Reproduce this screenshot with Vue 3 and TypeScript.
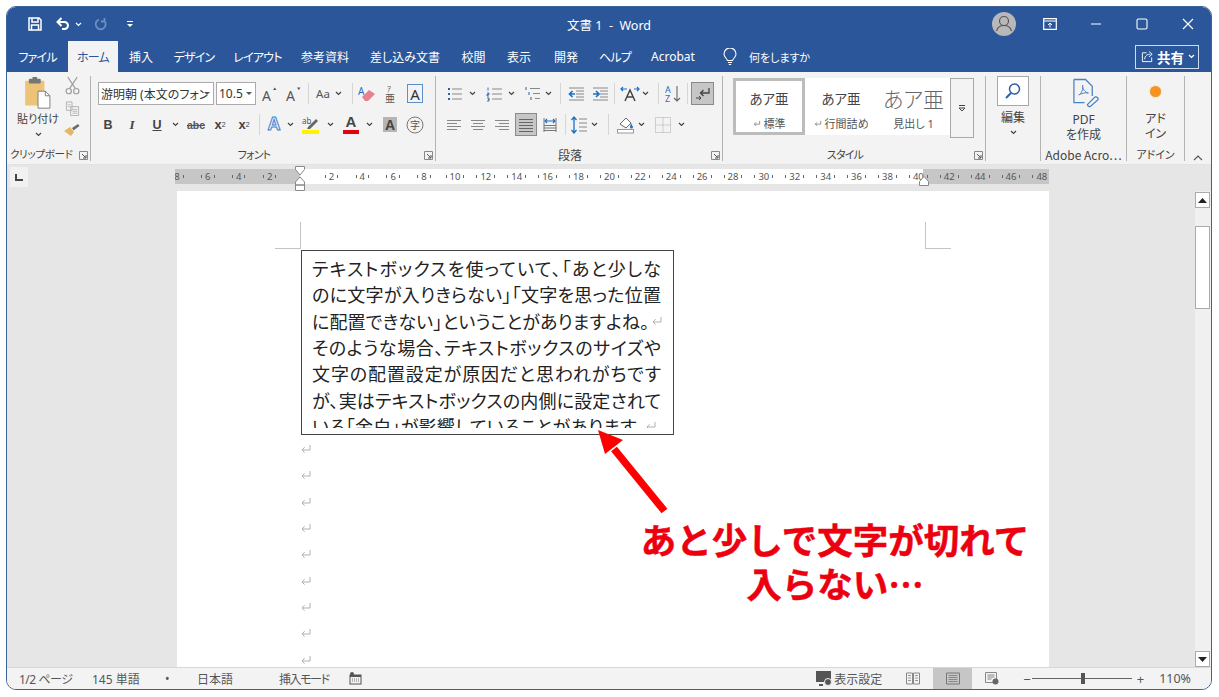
<script setup lang="ts">
interface Item { w: number; i?: string; iw?: number; ih?: number; t?: string; c?: string; sub?: string; sup?: string; sep?: boolean; bar?: string; drop?: boolean }
const sp = (w: number): Item => ({ w })
const ic = (w: number, i: string, iw = 16, ih = 16): Item => ({ w, i, iw, ih })
const ch = (w = 12): Item => ({ w, i: 'chev', iw: 7, ih: 5 })
const sep = (): Item => ({ w: 1, sep: true })
const tx = (w: number, t: string, c: string, extra: Partial<Item> = {}): Item => ({ w, t, c, ...extra })

const tabs = [
  { t: 'ファイル', w: 61, k: true }, { t: 'ホーム', w: 50, on: true, k: true }, { t: '挿入', w: 46 }, { t: 'デザイン', w: 60, k: true },
  { t: 'レイアウト', w: 67, k: true }, { t: '参考資料', w: 68 }, { t: '差し込み文書', w: 92 }, { t: '校閲', w: 45 },
  { t: '表示', w: 46 }, { t: '開発', w: 48 }, { t: 'ヘルプ', w: 50, k: true }, { t: 'Acrobat', w: 66 },
]

const font1: Item[] = [
  tx(116, '游明朝 (本文のフォン', 'combo', { drop: true }), sp(2), tx(40, '10.5', 'combo', { drop: true }), sp(2),
  ic(24, 'growA', 16, 16), ic(23, 'shrinkA', 16, 16), sp(3), sep(), sp(4), tx(20, 'Aa', 'aa'), ch(10), sp(9), sep(), sp(2),
  ic(24, 'eraser', 18, 18), ic(24, 'furi', 14, 18), tx(24, 'A', 'boxa'),
]
const font2: Item[] = [
  tx(20, 'B', 'bb'), sp(4), tx(20, 'I', 'ii'), sp(5), tx(20, 'U', 'uu'), sp(2), ch(), sp(3), tx(24, 'abc', 'abc'),
  tx(24, 'x', 'xx', { sub: '2' }), tx(24, 'x', 'xx', { sup: '2' }), sp(3), sep(), sp(3), tx(22, 'A', 'outa'), ch(10), sp(4),
  ic(24, 'hilite', 18, 18), sp(2), ch(10), sp(4), tx(24, 'A', 'bara', { bar: 'red' }), ch(), sp(3), tx(24, 'A', 'shada'), sp(1), ic(24, 'kanji', 18, 18),
]
const para1: Item[] = [
  ic(18, 'bullets'), sp(2), ch(), sp(7), ic(18, 'numbers'), sp(2), ch(), sp(5), ic(20, 'multi'), ch(), sp(6), sep(), sp(3),
  ic(24, 'outdent'), ic(24, 'indent'), sp(2), sep(), sp(4), ic(22, 'xa', 20, 16), ch(8), sp(9), sep(), sp(3), ic(24, 'sort', 18, 18), sp(1), sep(), sp(3),
  { ...ic(23, 'para', 16, 14), c: 'pressed' },
]
const para2: Item[] = [
  ic(16, 'aleft', 14, 14), sp(8), ic(16, 'acenter', 14, 14), sp(8), ic(16, 'aright', 14, 14), sp(5),
  { ...ic(22, 'ajust', 14, 14), c: 'pressed' }, sp(3), ic(20, 'adist', 16, 16), sp(5), sep(), sp(3), ic(20, 'lines', 16, 18), ch(10), sp(9), sep(), sp(7),
  ic(20, 'shade', 18, 18), ch(10), sp(7), ic(20, 'borders', 16, 16), sp(3), ch(10),
]

const styles = [
  { a: 'あア亜', b: '標準', cls: 'st1', mark: true },
  { a: 'あア亜', b: '行間詰め', cls: 'st2', mark: true },
  { a: 'あア亜', b: '見出し 1', cls: 'st3', mark: false },
]
const rulerNums = ['8', '6', '4', '2', '', ...Array.from({ length: 24 }, (_, k) => String((k + 1) * 2))]
const lines = [
  { t: 'テキストボックスを使っていて、「あと少しな' },
  { t: 'のに文字が入りきらない」「文字を思った位置' },
  { t: 'に配置できない」ということがありますよね。', cls: 'l3', ret: true },
  { t: 'そのような場合、テキストボックスのサイズや' },
  { t: '文字の配置設定が原因だと思われがちです' },
  { t: 'が、実はテキストボックスの内側に設定されて' },
  { t: 'いる「余白」が影響していることがあります。', cls: 'l7', ret: true },
]
const statusLeft = [
  { t: '1/2 ページ', w: 73, c: 'narrow' }, { t: '145 単語', w: 73 }, { t: '•', w: 32 }, { t: '日本語', w: 82 }, { t: '挿入モード', w: 70, c: 'narrower' },
]
</script>

<template>
  <div class="screen">
    <svg class="defs" width="0" height="0" aria-hidden="true">
      <defs>
        <symbol id="ret" viewBox="0 0 12 10"><path d="M10 1v5H2M4.600 3.200 2 6l2.600 2.600" fill="none" stroke="currentColor" stroke-width="1"/></symbol>
        <symbol id="chev" viewBox="0 0 7 5"><path d="M1 1l2.500 2.500L6 1" fill="none" stroke="#444" stroke-width="1.200"/></symbol>
        <symbol id="save" viewBox="0 0 14 14"><path d="M1 1h10l2 2v10H1zM4 1v4h6V1M3.500 13V8h7v5" fill="none" stroke="#fff" stroke-width="1.500"/></symbol>
        <symbol id="undo" viewBox="0 0 15 14"><path d="M3 5h6.500a3.300 3.300 0 0 1 0 7H7M6.500 1 2.500 5l4 4" fill="none" stroke="#fff" stroke-width="2"/></symbol>
        <symbol id="redo" viewBox="0 0 14 14"><path d="M10.500 4A5 5 0 1 1 5 2.500M10.500 1v3.500H7" fill="none" stroke="#6f8fc0" stroke-width="1.800"/></symbol>
        <symbol id="qdrop" viewBox="0 0 8 8"><path d="M1 1.500h6" stroke="#fff"/><path d="M1 4h6L4 7z" fill="#fff"/></symbol>
        <symbol id="person" viewBox="0 0 24 24"><circle cx="12" cy="12" r="12" fill="#b8b8b8"/><circle cx="12" cy="9" r="4.500" fill="none" stroke="#555" stroke-width="1.200"/><path d="M4.500 19c1-4 4-5.500 7.500-5.500s6.500 1.500 7.500 5.500" fill="none" stroke="#555" stroke-width="1.200"/></symbol>
        <symbol id="ribmode" viewBox="0 0 14 12"><path d="M.7.700h12.600v10.600H.700zM.7 3h12.600" fill="none" stroke="#fff" stroke-width="1.200"/><path d="M7 9.500V5M5 7l2-2 2 2" fill="none" stroke="#fff"/></symbol>
        <symbol id="min" viewBox="0 0 12 12"><path d="M1 6h10" stroke="#fff" stroke-width="1.100"/></symbol>
        <symbol id="max" viewBox="0 0 12 12"><rect x="1" y="1" width="10" height="10" rx="1.500" fill="none" stroke="#fff" stroke-width="1.100"/></symbol>
        <symbol id="close" viewBox="0 0 12 12"><path d="M1 1l10 10M11 1 1 11" stroke="#fff" stroke-width="1.100"/></symbol>
        <symbol id="bulb" viewBox="0 0 14 18"><path d="M4.500 12.500C3.500 10 1 9 1 6a6 6 0 0 1 12 0c0 3-2.500 4-3.500 6.500zM5 14.500h4M5.800 16.500h2.400" fill="none" stroke="#fff" stroke-width="1.100"/></symbol>
        <symbol id="share" viewBox="0 0 14 14"><path d="M6 3H1.500v9.500h10V8" fill="none" stroke="#fff"/><path d="M4 10c0-4 3-5.500 6-5.500M8.500 1.500 12 4.500 8.500 7.500" fill="none" stroke="#fff"/></symbol>
        <symbol id="paste" viewBox="0 0 30 36"><rect x="1" y="4" width="21" height="27" rx="1" fill="#edc477"/><rect x="5" y="2" width="13" height="5" rx="1" fill="#777"/><rect x="9" y="0" width="5" height="3" fill="#777"/><path d="M15 15.500h8l5 5V34H15z" fill="#fff" stroke="#777"/><path d="M23 15.500v5h5" fill="none" stroke="#777"/></symbol>
        <symbol id="cut" viewBox="0 0 16 20"><path d="M3 1l8 12M13 1 5 13" stroke="#a0a0a0" stroke-width="1.300" fill="none"/><circle cx="4" cy="16" r="2.800" fill="none" stroke="#a0a0a0" stroke-width="1.300"/><circle cx="12" cy="16" r="2.800" fill="none" stroke="#a0a0a0" stroke-width="1.300"/></symbol>
        <symbol id="copy" viewBox="0 0 16 16"><path d="M1.500 1h6v9h-6zM6 6h8.500v9.500H6z" fill="#f3f3f3" stroke="#b0b0b0"/><path d="M3 4h3M3 6h2M8 9h5M8 11h5M8 13h5" stroke="#b8b8b8"/></symbol>
        <symbol id="painter" viewBox="0 0 18 14"><path d="M1 8l6-4 4 5-3 4z" fill="#e6b664"/><path d="M9 5l6-4 1.500 2-6 4.500z" fill="#6b6b6b"/></symbol>
        <symbol id="growA" viewBox="0 0 16 16"><text x="0" y="14.500" class="svt" font-size="14">A</text><path d="M11 4l1.800-2.500L14.500 4z" fill="#555"/></symbol>
        <symbol id="shrinkA" viewBox="0 0 16 16"><text x="0" y="14.500" class="svt" font-size="14">A</text><path d="M11 1.500l1.800 2.500 1.700-2.500z" fill="#555"/></symbol>
        <symbol id="eraser" viewBox="0 0 18 18"><text x="0" y="10" class="svt svb" font-size="10">A</text><path d="M4 12l7-7 6 4-7 7H7z" fill="#e9808e"/></symbol>
        <symbol id="furi" viewBox="0 0 14 18"><text x="3" y="7" class="svt" font-size="8">ｱ</text><text x="1" y="16.500" class="svt" font-size="10">亜</text></symbol>
        <symbol id="hilite" viewBox="0 0 18 18"><text x="0" y="8" class="svt" font-size="8">ab</text><path d="M6 11l8-8 2 2-8 8H5z" fill="#666"/><rect x="0" y="14" width="17" height="4" fill="#fff200"/></symbol>
        <symbol id="kanji" viewBox="0 0 18 18"><circle cx="9" cy="9" r="8" fill="none" stroke="#777"/><text x="4" y="13" class="svt" font-size="10">字</text></symbol>
        <symbol id="bullets" viewBox="0 0 16 16"><path d="M5 3h10M5 8h10M5 13h10" stroke="#888"/><path d="M1 2h2v2H1zM1 7h2v2H1zM1 12h2v2H1z" fill="#2c5fa8"/></symbol>
        <symbol id="numbers" viewBox="0 0 16 16"><path d="M6 3h10M6 8h10M6 13h10" stroke="#888"/><path d="M2 1.500v3M1 7h2v1.500H1V10h2M1 12h2v3H1M2 13.500h1" stroke="#2c5fa8" fill="none" stroke-width=".9"/></symbol>
        <symbol id="multi" viewBox="0 0 16 16"><path d="M6 2.500h10M9 7.500h7M11 12.500h5" stroke="#888"/><path d="M2 1v3M5 6v3M7 11v3" stroke="#2c5fa8"/></symbol>
        <symbol id="outdent" viewBox="0 0 16 16"><path d="M1 2h15M8 5h8M8 8h8M8 11h8M1 14h15" stroke="#888"/><path d="M7 8H2M4.500 5 1.500 8l3 3" fill="none" stroke="#1f6fc4" stroke-width="1.700"/></symbol>
        <symbol id="indent" viewBox="0 0 16 16"><path d="M1 2h15M8 5h8M8 8h8M8 11h8M1 14h15" stroke="#888"/><path d="M1 8h5M4 5l3 3-3 3" fill="none" stroke="#1f6fc4" stroke-width="1.700"/></symbol>
        <symbol id="xa" viewBox="0 0 20 16"><path d="M5 15 10 4l5 11M7 11h6" fill="none" stroke="#444" stroke-width="1.500"/><path d="M1 3h6M14 3h5M3 1 1 3l2 2M17 1l2 2-2 2" fill="none" stroke="#1f6fc4" stroke-width="1.200"/></symbol>
        <symbol id="sort" viewBox="0 0 18 18"><text x="0" y="8" class="svt svb" font-size="9">A</text><text x="0" y="17" class="svt svp" font-size="9">Z</text><path d="M12 1v15M9 13l3 3 3-3" fill="none" stroke="#666" stroke-width="1.100"/></symbol>
        <symbol id="para" viewBox="0 0 16 14"><path d="M14 1v5H6M8.500 3 5.500 6l3 3" fill="none" stroke="#444" stroke-width="1.300"/><path d="M1 11h5M4 9l2 2-2 2" fill="none" stroke="#444"/></symbol>
        <symbol id="aleft" viewBox="0 0 14 14"><path d="M0 2.500h14M0 5.500h10M0 8.500h14M0 11.500h10" stroke="#888"/></symbol>
        <symbol id="acenter" viewBox="0 0 14 14"><path d="M0 2.500h14M2 5.500h10M0 8.500h14M2 11.500h10" stroke="#888"/></symbol>
        <symbol id="aright" viewBox="0 0 14 14"><path d="M0 2.500h14M4 5.500h10M0 8.500h14M4 11.500h10" stroke="#888"/></symbol>
        <symbol id="ajust" viewBox="0 0 14 14"><path d="M0 1.500h14M0 4.500h14M0 7.500h14M0 10.500h14M0 13.500h14" stroke="#666"/></symbol>
        <symbol id="adist" viewBox="0 0 16 16"><path d="M2 1v14M14 1v14" stroke="#777"/><path d="M3 4h10M5 2 3 4l2 2M11 2l2 2-2 2" fill="none" stroke="#1f6fc4" stroke-width="1.100"/><path d="M2 8.500h12M2 11h12M2 13.500h12" stroke="#777"/></symbol>
        <symbol id="lines" viewBox="0 0 16 18"><path d="M3 1v16M.5 4 3 1l2.500 3M.5 14 3 17l2.500-3" fill="none" stroke="#1f6fc4" stroke-width="1.300"/><path d="M8 3h8M8 7h8M8 11h8M8 15h8" stroke="#888"/></symbol>
        <symbol id="shade" viewBox="0 0 18 18"><path d="M3 8l6-6 5 5-5 5z" fill="#fff" stroke="#666"/><path d="M14 7l2 4a1.500 1.500 0 0 1-3 0z" fill="#1f6fc4"/><rect x=".5" y="13.500" width="16" height="3.500" fill="#fff" stroke="#999"/></symbol>
        <symbol id="borders" viewBox="0 0 16 16"><path d="M.5.500h15v15H.500zM8 .5v15M.5 8h15" fill="none" stroke="#aaa" stroke-dasharray="1 1"/></symbol>
        <symbol id="launch" viewBox="0 0 9 9"><path d="M.5 8.500v-8h8v8z" fill="none" stroke="#888"/><path d="M3 3l4 4M4 7h3V4" fill="none" stroke="#555"/></symbol>
        <symbol id="search" viewBox="0 0 18 18"><circle cx="10.500" cy="7" r="5" fill="none" stroke="#2c5fa8" stroke-width="1.500"/><path d="M7 11l-5 5" stroke="#2c5fa8" stroke-width="2"/></symbol>
        <symbol id="pdf" viewBox="0 0 28 30"><path d="M2 1h12l7 7v10M2 1v24h11" fill="none" stroke="#4a80c4" stroke-width="1.300"/><path d="M7 17c3-1 5-7 4-10-1 3 3 8 6 8-3-1-8 1-10 2z" fill="none" stroke="#4a80c4"/><path d="M16 27l8-8a2.500 2.500 0 0 1 3 3l-8 7a2.500 2.500 0 0 1-3-2z" fill="none" stroke="#4a80c4" stroke-width="1.300"/></symbol>
        <symbol id="stmore" viewBox="0 0 8 8"><path d="M1 1.500h6" stroke="#444"/><path d="M1 4h6L4 7z" fill="none" stroke="#444"/></symbol>
        <symbol id="caret" viewBox="0 0 10 6"><path d="M1 5l4-4 4 4" fill="none" stroke="#555" stroke-width="1.100"/></symbol>
        <symbol id="macro" viewBox="0 0 13 13"><rect x="1" y="3" width="11" height="9" fill="none" stroke="#555"/><path d="M1 3h11v2H1z" fill="#555"/><circle cx="3" cy="2" r="2" fill="#555"/><path d="M3 7h7M3 9h7" stroke="#777" stroke-dasharray="1 1"/></symbol>
        <symbol id="disp" viewBox="0 0 18 16"><rect x="0" y="0" width="15" height="11" fill="#555"/><circle cx="12" cy="11" r="3.500" fill="#555" stroke="#f3f3f3"/><path d="M3 14h4" stroke="#555" stroke-width="2"/></symbol>
        <symbol id="read" viewBox="0 0 14 12"><path d="M.5.500h6v11h-6zM7.500.500h6v11h-6z" fill="none" stroke="#888"/><path d="M2 3h3M2 5.500h3M2 8h3M9 3h3M9 5.500h3M9 8h3" stroke="#999"/></symbol>
        <symbol id="print" viewBox="0 0 14 12"><path d="M.5.500h13v11H.500z" fill="none" stroke="#777"/><path d="M2.500 3h9M2.500 5h9M2.500 7h9M2.500 9h9" stroke="#888"/></symbol>
        <symbol id="web" viewBox="0 0 14 13"><path d="M.5.500h11v10H.500z" fill="none" stroke="#888"/><path d="M2.500 3h7M2.500 5h7M2.500 7h4" stroke="#888"/><circle cx="10.500" cy="9.500" r="3" fill="#666"/></symbol>
        <symbol id="up" viewBox="0 0 9 5"><path d="M0 5 4.500 0 9 5z" fill="#222"/></symbol>
        <symbol id="down" viewBox="0 0 9 5"><path d="M0 0l4.500 5L9 0z" fill="#222"/></symbol>
      </defs>
    </svg>

    <div class="window">
      <header class="titlebar">
        <div class="qat">
          <svg class="q-save"><use href="#save" /></svg>
          <svg class="q-undo"><use href="#undo" /></svg>
          <svg class="q-chev"><use href="#chev" /></svg>
          <svg class="q-redo"><use href="#redo" /></svg>
          <svg class="q-drop"><use href="#qdrop" /></svg>
        </div>
        <div class="doc-title">文書 1&nbsp;&nbsp;-&nbsp;&nbsp;Word</div>
        <div class="winctl">
          <svg class="avatar"><use href="#person" /></svg>
          <span class="wbtn"><svg class="w14"><use href="#ribmode" /></svg></span>
          <span class="wbtn"><svg class="w12"><use href="#min" /></svg></span>
          <span class="wbtn"><svg class="w12"><use href="#max" /></svg></span>
          <span class="wbtn"><svg class="w12"><use href="#close" /></svg></span>
        </div>
      </header>

      <nav class="tabs">
        <span v-for="t in tabs" :key="t.t" class="tab" :class="{ on: t.on, kana: t.k }" :style="{ width: t.w + 'px' }">{{ t.t }}</span>
        <svg class="bulb"><use href="#bulb" /></svg>
        <span class="tell">何をしますか</span>
        <span class="sharebtn">
          <svg class="shareic"><use href="#share" /></svg><b>共有</b><svg class="sharech"><use href="#chev" /></svg>
        </span>
      </nav>

      <section class="ribbon">
        <div class="group g-clip">
          <div class="gbody clipbody">
            <div class="pastecol">
              <svg class="pasteic"><use href="#paste" /></svg>
              <span class="pastelabel">貼り付け</span>
              <svg class="ch7"><use href="#chev" /></svg>
            </div>
            <div class="clipsmall">
              <svg class="cutic"><use href="#cut" /></svg>
              <svg class="copyic"><use href="#copy" /></svg>
              <svg class="paintic"><use href="#painter" /></svg>
            </div>
          </div>
          <div class="glabel">クリップボード<svg class="launch"><use href="#launch" /></svg></div>
        </div>

        <div class="group g-font">
          <div class="gbody rows">
            <div v-for="(row, ri) in [font1, font2]" :key="ri" class="irow">
              <span v-for="(it, k) in row" :key="k" class="cell" :class="[it.c, { sepc: it.sep }]" :style="{ width: it.w + 'px' }">
                <svg v-if="it.i" :width="it.iw" :height="it.ih"><use :href="'#' + it.i" /></svg>
                <template v-else-if="it.t">{{ it.t }}<sub v-if="it.sub">{{ it.sub }}</sub><sup v-if="it.sup">{{ it.sup }}</sup></template>
                <i v-if="it.bar" class="bar"></i>
                <i v-if="it.drop" class="drop"></i>
              </span>
            </div>
          </div>
          <div class="glabel lb">フォント<svg class="launch"><use href="#launch" /></svg></div>
        </div>

        <div class="group g-para">
          <div class="gbody rows">
            <div v-for="(row, ri) in [para1, para2]" :key="ri" class="irow">
              <span v-for="(it, k) in row" :key="k" class="cell" :class="[it.c, { sepc: it.sep }]" :style="{ width: it.w + 'px' }">
                <svg v-if="it.i" :width="it.iw" :height="it.ih"><use :href="'#' + it.i" /></svg>
              </span>
            </div>
          </div>
          <div class="glabel lb kanji">段落<svg class="launch"><use href="#launch" /></svg></div>
        </div>

        <div class="group g-style">
          <div class="gbody stylebody">
            <div class="gallery">
              <div v-for="s in styles" :key="s.b" class="stitem" :class="s.cls">
                <span class="sa">{{ s.a }}</span>
                <span class="sb"><svg v-if="s.mark" class="sret"><use href="#ret" /></svg>{{ s.b }}</span>
              </div>
            </div>
            <div class="stmore"><svg class="stm"><use href="#stmore" /></svg></div>
          </div>
          <div class="glabel lb">スタイル<svg class="launch"><use href="#launch" /></svg></div>
        </div>

        <div class="group g-edit">
          <div class="gbody colc">
            <span class="searchbtn"><svg class="searchic"><use href="#search" /></svg></span>
            <span class="biglabel mt4">編集</span>
            <svg class="ch7 mt5"><use href="#chev" /></svg>
          </div>
          <div class="glabel"></div>
        </div>

        <div class="group g-adobe">
          <div class="gbody colc">
            <svg class="pdfic"><use href="#pdf" /></svg>
            <span class="biglabel mt3">PDF</span>
            <span class="biglabel">を作成</span>
          </div>
          <div class="glabel nosp">Adobe Acro…</div>
        </div>

        <div class="group g-addin">
          <div class="gbody colc">
            <i class="dot"></i>
            <span class="biglabel mt12">アド</span>
            <span class="biglabel">イン</span>
          </div>
          <div class="glabel">アドイン</div>
        </div>

        <div class="collapse"><svg class="caret"><use href="#caret" /></svg></div>
      </section>

      <div class="rulerrow">
        <span class="corner"><i class="lmark"></i></span>
        <div class="ruler">
          <div class="rnums">
            <span v-for="(n, k) in rulerNums" :key="k" class="rcell">
              <i v-if="n" class="tick"></i><span v-if="n">{{ n }}</span><i v-if="n" class="tick"></i>
            </span>
          </div>
          <svg class="indent-l" viewBox="0 0 10 25"><path d="M.5.500h9v3L5 9 .5 3.500zM5 11l4.500 5v3h-9v-3zM.5 19h9v5.500h-9z" fill="#fff" stroke="#888"/></svg>
          <svg class="indent-r" viewBox="0 0 10 10"><path d="M5 .5l4.500 5v4h-9v-4z" fill="#fff" stroke="#888"/></svg>
        </div>
      </div>

      <main class="docarea">
        <div class="canvas">
          <div class="page">
            <i class="crop cl-v"></i><i class="crop cl-h"></i><i class="crop cr-v"></i><i class="crop cr-h"></i>
            <div class="textbox">
              <div class="tbinner">
                <div v-for="l in lines" :key="l.t" class="tline" :class="l.cls">
                  <span class="ltext">{{ l.t }}</span>
                  <svg v-if="l.ret" class="retmark"><use href="#ret" /></svg>
                </div>
              </div>
            </div>
            <div class="marks">
              <div v-for="n in 9" :key="n" class="markline"><svg class="retmark"><use href="#ret" /></svg></div>
            </div>
            <svg class="arrow" viewBox="0 0 80 90"><path d="M66.500 81 16 19" stroke="#ff0000" stroke-width="7.500" fill="none"/><path d="M0 0l25 10-18 14z" fill="#ff0000"/></svg>
            <div class="callout">あと少しで文字が切れて<br />入らない…</div>
          </div>
        </div>
        <aside class="scrollbar">
          <span class="sbtn"><svg class="arr"><use href="#up" /></svg></span>
          <span class="thumb"></span>
          <span class="sbtn bottom"><svg class="arr"><use href="#down" /></svg></span>
        </aside>
      </main>

      <footer class="status">
        <span v-for="s in statusLeft" :key="s.t" class="sitem" :class="s.c" :style="{ width: s.w + 'px' }">{{ s.t }}</span>
        <svg class="macro"><use href="#macro" /></svg>
        <div class="sright">
          <svg class="dispic"><use href="#disp" /></svg><span class="disptxt">表示設定</span>
          <span class="vbtn v1"><svg class="vic"><use href="#read" /></svg></span>
          <span class="vbtn active"><svg class="vic"><use href="#print" /></svg></span>
          <span class="vbtn v3"><svg class="vic"><use href="#web" /></svg></span>
          <span class="zsign z1">−</span>
          <span class="slider"><i class="sthumb"></i></span>
          <span class="zsign">+</span>
          <span class="zoomv">110%</span>
        </div>
      </footer>
    </div>
  </div>
</template>

<style scoped>
.screen {
  width: 1219px; height: 697px; box-sizing: border-box; padding: 6px 7px 7px 6px; background: #fff; overflow: hidden;
  font-family: "Noto Sans", "Noto Sans CJK JP", sans-serif; font-feature-settings: "palt"; color: #444;
}
.defs { position: absolute; }
.svt { font-family: "Noto Sans", "Noto Sans CJK JP", sans-serif; fill: #555; }
.svb { fill: #1f6fc4; }
.svp { fill: #7a4fb0; }
.window {
  height: 684px; box-sizing: border-box; border: 1px solid #3c6399; border-radius: 10px; overflow: hidden;
  display: flex; flex-direction: column; background: #f3f3f3;
}
.titlebar { height: 34px; flex: none; background: #2b579a; display: flex; align-items: center; color: #fff; }
.qat { flex: 1 1 0; display: flex; align-items: center; }
.q-save { width: 14px; height: 14px; margin-left: 21px; }
.q-undo { width: 15px; height: 14px; margin-left: 13px; }
.q-chev { width: 7px; height: 5px; margin-left: 5px; filter: brightness(4); }
.q-redo { width: 14px; height: 14px; margin-left: 12px; }
.q-drop { width: 8px; height: 8px; margin-left: 18px; }
.doc-title { font-size: 12.500px; white-space: pre; }
.winctl { flex: 1 1 0; display: flex; align-items: center; justify-content: flex-end; }
.avatar { width: 24px; height: 24px; margin-right: 11px; }
.wbtn { width: 46px; display: flex; justify-content: center; }
.w14 { width: 14px; height: 12px; }
.w12 { width: 12px; height: 12px; }

.tabs { height: 31px; flex: none; background: #2b579a; display: flex; align-items: stretch; color: #fff; font-size: 12px; }
.tab { display: flex; align-items: center; justify-content: center; white-space: nowrap; }
.tab.kana { letter-spacing: -.8px; }
.tab.on { background: #f3f3f3; color: #2b579a; }
.bulb { width: 14px; height: 18px; align-self: center; margin-left: 17px; }
.tell { align-self: center; margin-left: 12px; font-size: 11px; }
.sharebtn {
  margin-left: auto; margin-right: 12px; align-self: center; width: 64px; height: 24px; box-sizing: border-box; border: 1px solid #cfdcee;
  display: flex; align-items: center; font-size: 13.500px;
}
.shareic { width: 13px; height: 13px; margin-left: 5px; }
.sharebtn b { margin-left: 3px; }
.sharech { width: 7px; height: 5px; margin-left: 4px; filter: brightness(4); }

.ribbon { height: 93px; flex: none; display: flex; background: #f3f3f3; padding-top: 4px; box-sizing: border-box; border-bottom: 1px solid #e2e2e2; }
.group { display: flex; flex-direction: column; position: relative; box-sizing: border-box; border-right: 1px solid #b4b4b4; margin-bottom: 3px; }
.g-clip { width: 84px; }
.g-font { width: 345px; }
.g-para { width: 287px; }
.g-style { width: 263px; }
.g-edit { width: 55px; }
.g-adobe { width: 86px; }
.g-addin { width: 58px; }
.gbody { height: 70px; flex: none; }
.glabel { flex: 1; display: flex; align-items: center; justify-content: center; font-size: 11px; white-space: nowrap; color: #444; padding-top: 0; }
.lb { padding-right: 18px; letter-spacing: -.8px; }
.lb.kanji { font-size: 12px; letter-spacing: 0; }
.nosp { font-family: "Noto Sans CJK JP", sans-serif; font-feature-settings: normal; font-size: 12px; }
.launch { position: absolute; width: 9px; height: 9px; right: 2px; bottom: 1px; }
.g-clip .glabel { justify-content: flex-start; padding-left: 3px; font-size: 10.500px; letter-spacing: -.3px; }

.clipbody { display: flex; padding-left: 6px; }
.pastecol { width: 50px; display: flex; flex-direction: column; align-items: center; }
.pasteic { width: 28px; height: 33px; margin-top: 1px; flex: none; }
.pastelabel { font-size: 11px; margin-top: 1px; line-height: 16px; white-space: nowrap; }
.ch7 { width: 7px; height: 5px; flex: none; }
.pastecol .ch7 { margin-top: 5px; }
.clipsmall { width: 18px; display: flex; flex-direction: column; align-items: center; }
.cutic { width: 15px; height: 19px; flex: none; }
.copyic { width: 15px; height: 15px; margin-top: 6px; flex: none; }
.paintic { width: 18px; height: 14px; margin-top: 7px; flex: none; }

.rows { padding-top: 6px; box-sizing: border-box; display: flex; flex-direction: column; gap: 8px; }
.g-font .rows { padding-left: 7px; }
.g-para .rows { padding-left: 10px; }
.irow { display: flex; height: 23px; }
.cell { flex: none; height: 23px; box-sizing: border-box; display: flex; align-items: center; justify-content: center; position: relative; white-space: nowrap; }
.sepc { background: #d6d6d6; height: 21px; margin-top: 1px; }
.pressed { background: #c6c6c6; border: 1px solid #8a8a8a; }
.combo { background: #fff; border: 1px solid #ababab; justify-content: flex-start; padding-left: 2px; font-size: 12px; overflow: hidden; color: #333; }
.drop { position: absolute; right: 3px; top: 9px; border: 3px solid transparent; border-top: 3px solid #555; border-bottom: 0; background: #fff; }
.aa { font-size: 11.500px; color: #555; }
.boxa { font-size: 15px; color: #333; }
.boxa::after { content: ""; position: absolute; left: 4px; right: 4px; top: 2px; bottom: 2px; border: 1px solid #5d90c8; }
.bb { font: bold 12.500px "Liberation Sans", sans-serif; }
.ii { font: italic bold 13px "Liberation Serif", serif; }
.uu { font: bold 12.500px "Liberation Sans", sans-serif; text-decoration: underline; }
.abc { font: bold 10.500px "Liberation Sans", sans-serif; text-decoration: line-through; color: #555; }
.xx { font: bold 13px "Liberation Sans", sans-serif; color: #444; }
.xx sub, .xx sup { font-size: 7px; font-weight: normal; line-height: 0; }
.outa { font: bold 18px "Liberation Sans", sans-serif; color: #e9f1fb; -webkit-text-stroke: 1px #3f83cf; }
.bara { font: bold 15px "Liberation Sans", sans-serif; align-items: flex-start; line-height: 18px; color: #444; }
.bar { position: absolute; left: 4px; right: 4px; bottom: 2px; height: 4px; background: #e60012; }
.shada { font: bold 14px "Liberation Sans", sans-serif; color: #444; isolation: isolate; }
.shada::before { content: ""; position: absolute; left: 5px; right: 5px; top: 4px; bottom: 4px; background: #b5b5b5; z-index: -1; }

.stylebody { display: flex; padding: 2px 0 0 10px; box-sizing: border-box; }
.gallery { width: 217px; height: 57px; background: #fff; display: flex; }
.stitem { display: flex; flex-direction: column; align-items: center; box-sizing: border-box; }
.st1 { width: 72px; border: 3px solid #bcbcbc; }
.st2 { width: 72px; border: 3px solid transparent; }
.st3 { width: 73px; border: 3px solid transparent; }
.sa { height: 34px; flex: none; display: flex; align-items: center; font-size: 13.500px; color: #444; white-space: nowrap; }
.st3 .sa { font-size: 21px; color: #666; font-weight: 300; letter-spacing: 0; }
.sb { font-size: 11px; display: flex; align-items: center; color: #555; white-space: nowrap; }
.sret { width: 8px; height: 7px; color: #666; margin-right: 3px; }
.stmore { width: 24px; height: 60px; box-sizing: border-box; border: 1px solid #a8a8a8; display: flex; align-items: center; justify-content: center; }
.stm { width: 8px; height: 8px; }

.colc { display: flex; flex-direction: column; align-items: center; }
.searchbtn { width: 32px; height: 30px; flex: none; box-sizing: border-box; background: #fff; border: 1px solid #a8a8a8; display: flex; align-items: center; justify-content: center; }
.searchic { width: 18px; height: 18px; }
.biglabel { font-size: 12px; line-height: 15px; flex: none; white-space: nowrap; color: #444; }
.mt4 { margin-top: 4px; }
.mt5 { margin-top: 5px; }
.mt3 { margin-top: 4px; }
.mt12 { margin-top: 14px; }
.pdfic { width: 27px; height: 30px; flex: none; margin: 2px 0 0 3px; }
.dot { width: 11px; height: 11px; flex: none; border-radius: 50%; background: #f7931e; margin-top: 10px; box-shadow: 0 0 2px #f7c27a; }
.collapse { flex: 1; display: flex; align-items: flex-end; justify-content: flex-end; padding: 0 8px 3px 0; }
.caret { width: 10px; height: 6px; }

.rulerrow { height: 26px; flex: none; background: #e6e6e6; display: flex; align-items: flex-start; }
.corner { width: 18px; height: 20px; margin: 2px 0 0 3px; background: #f1f1f1; display: flex; align-items: center; justify-content: center; }
.lmark { width: 6px; height: 5px; border-left: 2px solid #444; border-bottom: 2px solid #444; }
.ruler {
  position: relative; width: 874px; height: 15px; margin: 4px 0 0 147px;
  background: linear-gradient(90deg, #c6c6c6 125px, #fff 125px, #fff 748px, #c6c6c6 748px);
}
.rnums { display: flex; margin-left: -13.500px; height: 15px; clip-path: inset(0 0 0 13.500px); }
.rcell { flex: none; width: 30.900px; display: flex; align-items: center; justify-content: center; gap: 3px; font: 9.500px "Noto Sans", sans-serif; color: #555; }
.tick { width: 1px; height: 3px; background: #666; }
.indent-l { position: absolute; left: 120px; top: -3px; width: 10px; height: 25px; }
.indent-r { position: absolute; left: 744px; top: 7px; width: 10px; height: 10px; }

.docarea { flex: 1; min-height: 0; display: flex; }
.canvas { flex: 1; background: #e6e6e6; padding-left: 170px; overflow: hidden; }
.page { position: relative; width: 872px; height: 100%; background: #fff; padding-top: 59px; box-sizing: border-box; overflow: hidden; }
.crop { position: absolute; background: #c4c4c4; }
.cl-v { left: 123px; top: 31px; width: 1px; height: 26px; }
.cl-h { left: 98px; top: 57px; width: 26px; height: 1px; }
.cr-v { left: 748px; top: 31px; width: 1px; height: 26px; }
.cr-h { left: 748px; top: 57px; width: 26px; height: 1px; }
.textbox { margin-left: 124px; width: 373px; height: 185px; box-sizing: border-box; border: 1px solid #444; padding: 4px 10px 0; background: #fff; }
.tbinner { height: 173px; overflow: hidden; }
.tline { height: 26.300px; display: flex; align-items: center; font-size: 18px; color: #222; white-space: nowrap; }
.ltext { display: block; width: 349px; text-align: justify; text-align-last: justify; white-space: normal; }
.l3 .ltext { width: 338px; }
.l7 .ltext { width: 332px; }
.retmark { width: 12px; height: 10px; color: #b0b0b0; flex: none; margin-left: 2px; }
.l7 .retmark { margin-left: 1px; }
.marks { margin-left: 121px; margin-top: 1px; }
.markline { height: 26.300px; display: flex; align-items: center; }
.arrow { position: absolute; left: 421px; top: 239px; width: 80px; height: 90px; }
.callout {
  position: absolute; left: 458px; top: 326px; width: 400px; text-align: center; color: #ec0010; font-size: 35.500px; line-height: 44px;
  font-weight: 700; font-family: "Noto Sans CJK JP", sans-serif; font-feature-settings: normal; white-space: nowrap; -webkit-text-stroke: .5px #ec0010;
}

.scrollbar { width: 16px; flex: none; background: #f0f0f0; display: flex; flex-direction: column; padding-top: 1px; box-sizing: border-box; }
.sbtn { width: 15px; height: 16px; flex: none; box-sizing: border-box; background: #fff; border: 1px solid #ababab; display: flex; align-items: center; justify-content: center; }
.sbtn.bottom { margin-top: auto; }
.arr { width: 9px; height: 5px; }
.thumb { width: 15px; height: 83px; flex: none; margin-top: 18px; box-sizing: border-box; background: #fff; border: 1px solid #ababab; }

.status { height: 22px; flex: none; box-sizing: border-box; border-top: 1px solid #d8d8d8; background: #f3f3f3; display: flex; align-items: center; padding-left: 12px; font-size: 12px; color: #555; }
.sitem { flex: none; white-space: nowrap; }
.narrow { letter-spacing: -.5px; }
.narrower { letter-spacing: -1.400px; }
.macro { width: 13px; height: 13px; }
.sright { margin-left: auto; display: flex; align-items: center; height: 100%; padding-right: 20px; }
.dispic { width: 18px; height: 16px; }
.disptxt { margin-right: 21px; }
.vbtn { width: 39px; height: 100%; display: flex; align-items: center; justify-content: center; }
.v1 { width: 20px; margin-right: 10px; }
.v3 { margin-right: 9px; }
.vbtn.active { background: #c6c6c6; }
.vic { width: 14px; height: 13px; }
.zsign { font-size: 13px; margin: 0 3px 0 3px; }
.z1 { margin-right: -1px; }
.slider { position: relative; width: 100px; height: 1px; background: #666; margin: 0 2px; }
.sthumb { position: absolute; left: 49px; top: -5px; width: 4px; height: 11px; background: #555; }
.zoomv { margin-left: 12px; font-size: 12.500px; }
</style>
